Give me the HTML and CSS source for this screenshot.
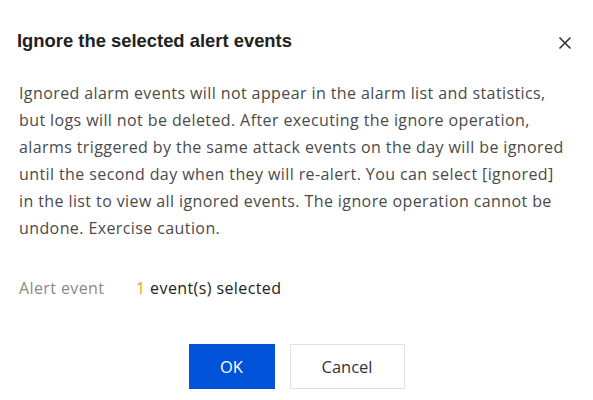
FILE: index.html
```html
<!DOCTYPE html>
<html>
<head>
<meta charset="utf-8">
<link rel="stylesheet" href="styles.css">
</head>
<body>
<div class="dialog">
  <div class="header">
    <h1 class="title">Ignore the selected alert events</h1>
    <button class="close" aria-label="Close">
      <svg width="14" height="14" viewBox="0 0 14 14"><path d="M1.5 1.5 L12.5 12.5 M12.5 1.5 L1.5 12.5" stroke="#333" stroke-width="1.6" fill="none"/></svg>
    </button>
  </div>
  <p class="desc">Ignored alarm events will not appear in the alarm list and statistics,<br>but logs will not be deleted. After executing the ignore operation,<br>alarms triggered by the same attack events on the day will be ignored<br>until the second day when they will re-alert. You can select [ignored]<br>in the list to view all ignored events. The ignore operation cannot be<br>undone. Exercise caution.</p>
  <div class="field">
    <span class="label">Alert event</span>
    <span class="value"><span class="count">1</span> event(s) selected</span>
  </div>
  <div class="footer">
    <button class="btn primary">OK</button>
    <button class="btn">Cancel</button>
  </div>
</div>
</body>
</html>
```
FILE: styles.css
```css
html, body {
  margin: 0;
  padding: 0;
  background: #fff;
}
.dialog {
  width: 593px;
  height: 400px;
  box-sizing: border-box;
  padding: 28px 19px 0 19px;
  font-family: "Open Sans", "Noto Sans", sans-serif;
}
.header {
  display: flex;
  justify-content: space-between;
  align-items: center;
  height: 26px;
}
.title {
  margin: 0 0 0 -2px;
  font-family: "Liberation Sans", Arial, sans-serif;
  font-weight: bold;
  font-size: 18.4px;
  color: #222;
}
.close {
  border: 0;
  background: none;
  padding: 0;
  margin: 3px 2px 0 0;
  width: 14px;
  height: 14px;
  display: flex;
}
.desc {
  margin: 26px 0 0 0;
  font-size: 16px;
  letter-spacing: 0.4px;
  line-height: 27px;
  color: #4a4a4a;
  white-space: nowrap;
}
.field {
  margin-top: 35px;
  display: flex;
  font-size: 16px;
  letter-spacing: 0.4px;
  line-height: 22px;
}
.label {
  width: 117px;
  color: #8a8a8a;
}
.count {
  color: #ff9a17;
}
.value {
  color: #222;
}
.footer {
  margin-top: 45px;
  display: flex;
  justify-content: center;
  gap: 15px;
}
.btn {
  height: 45px;
  border: 1px solid #e2e2e6;
  background: #fff;
  font-family: "Open Sans", "Noto Sans", sans-serif;
  font-size: 16.5px;
  color: #333;
  width: 115px;
  padding: 0;
}
.btn.primary {
  width: 86px;
  background: #0052d9;
  border-color: #0052d9;
  color: #fff;
}
```
